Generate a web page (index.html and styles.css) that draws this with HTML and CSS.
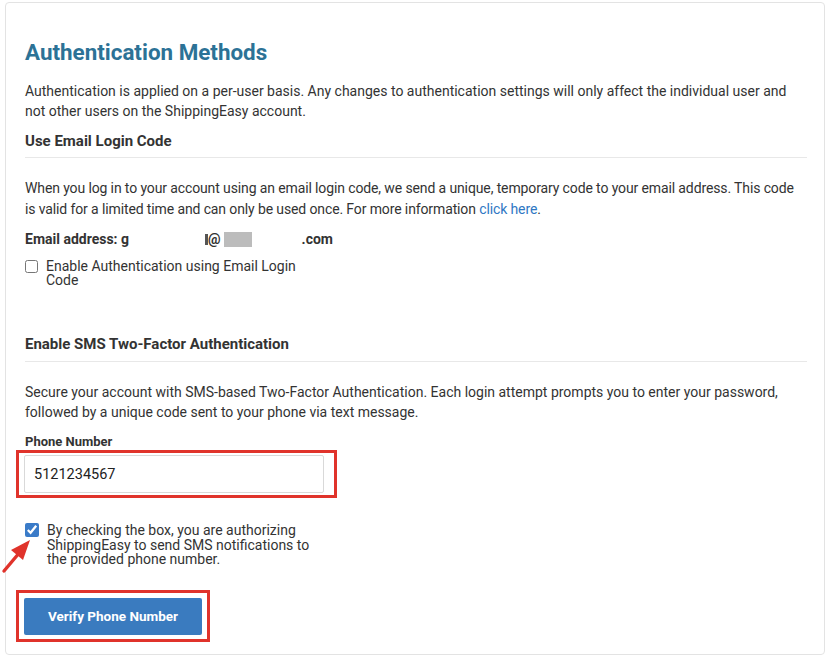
FILE: index.html
```html
<!DOCTYPE html>
<html lang="en">
  <head>
    <meta charset="UTF-8" />
    <meta name="viewport" content="width=device-width, initial-scale=1.0" />
    <title>Authentication Methods</title>
    <link rel="stylesheet" href="styles.css">
  </head>
  <body>
    <main class="panel">
      <h1>Authentication Methods</h1>
      <p class="intro">
        Authentication is applied on a per-user basis. Any changes to authentication settings will only affect the individual user and
        not other users on the ShippingEasy account.
      </p>

      <!-- Email login code -->
      <section class="method email">
        <h2>Use Email Login Code</h2>
        <p class="tight">
          When you log in to your account using an email login code, we send a unique, temporary code to your email address. This code
          is valid for a limited time and can only be used once. For more information <a href="#">click here</a>.
        </p>
        <div class="email-line">
          Email address: g<span class="blur blur-a"></span><span class="blur blur-b"></span>@<span class="blur blur-c"></span>.com
        </div>
        <label class="check">
          <input type="checkbox" />
          <span>Enable Authentication using Email Login Code</span>
        </label>
      </section>

      <!-- SMS two factor -->
      <section class="method sms">
        <h2>Enable SMS Two-Factor Authentication</h2>
        <p>
          Secure your account with SMS-based Two-Factor Authentication. Each login attempt prompts you to enter your password,
          followed by a unique code sent to your phone via text message.
        </p>
        <div class="field-label">Phone Number</div>
        <div class="highlight">
          <input type="text" class="phone" value="5121234567" />
        </div>
        <label class="check consent">
          <input type="checkbox" checked />
          <span>By checking the box, you are authorizing ShippingEasy to send SMS notifications to the provided phone number.</span>
          <svg class="arrow" width="34" height="36" viewBox="0 0 34 36">
            <path d="M3 33 L19 14" stroke="#e0332b" stroke-width="3.4" stroke-linecap="round" fill="none" />
            <path d="M10 12 L29 2 L22 22 Z" fill="#e0332b" />
          </svg>
        </label>
        <div class="highlight btn-wrap">
          <button class="btn-primary">Verify Phone Number</button>
        </div>
      </section>
    </main>
  </body>
</html>
```

FILE: styles.css
```css
body {
  margin: 0;
  padding: 0;
  background: #fff;
  font-family: Roboto, "Liberation Sans", Arial, sans-serif;
  color: #333;
}
.panel {
  margin: 2px 1px 0 5px;
  height: 653px;
  box-sizing: border-box;
  border: 1px solid #e3e3e3;
  border-radius: 4px;
  padding: 36px 17px 0 19px;
}
h1 {
  margin: 0 0 17px;
  font-size: 22.4px;
  line-height: 26px;
  font-weight: 700;
  color: #2c7296;
}
p {
  margin: 0;
  font-size: 14px;
  line-height: 19.5px;
}
.method h2 {
  margin: 10px 0 0;
  padding-bottom: 6px;
  border-bottom: 1px solid #e8e8e8;
  font-size: 15px;
  line-height: 20px;
  font-weight: 700;
  color: #333;
}
.method p {
  margin-top: 20px;
}
.method p.tight {
  line-height: 21px;
  letter-spacing: -0.12px;
}
a {
  color: #2f78c4;
  text-decoration: none;
}
.email-line {
  margin-top: 10px;
  font-size: 14px;
  line-height: 18px;
  font-weight: 700;
}
.blur {
  display: inline-block;
  vertical-align: -3px;
  height: 15px;
}
.blur-a {
  width: 66px;
}
.blur-b {
  width: 13px;
  border-right: 3px solid #555;
  box-sizing: border-box;
  height: 11px;
  vertical-align: -1px;
}
.blur-c {
  width: 28px;
  background: #bcbcbc;
  margin-left: 3px;
  margin-right: 50px;
}
.check {
  display: flex;
  align-items: flex-start;
  gap: 8px;
  width: 290px;
  margin-top: 11px;
  font-size: 14px;
  line-height: 14px;
  position: relative;
}
.check input {
  margin: 1px 0 0;
  width: 13px;
  height: 13px;
  flex: none;
  accent-color: #3a7bc8;
}
.sms h2 {
  margin-top: 47px;
  padding-bottom: 7px;
}
.sms p {
  margin-top: 21px;
}
.field-label {
  margin-top: 12px;
  font-size: 13px;
  line-height: 16px;
  font-weight: 700;
}
.highlight {
  display: inline-block;
  margin: 0 0 0 -9px;
  border: 3px solid #e0332b;
  padding: 2px 10px 2px 5px;
}
.phone {
  display: block;
  width: 300px;
  height: 38px;
  box-sizing: border-box;
  border: 1px solid #d9d9d9;
  border-radius: 2px;
  padding: 0 9px;
  font-family: inherit;
  font-size: 14.5px;
  color: #222;
}
.consent {
  margin-top: 25px;
  width: 300px;
  line-height: 14.5px;
}
.consent input {
  width: 14px;
  height: 14px;
  margin-top: 0;
}
.arrow {
  position: absolute;
  left: -24px;
  top: 15px;
}
.btn-wrap {
  margin-top: 23px;
  padding: 5px 5px 4px 5px;
}
.btn-primary {
  display: block;
  width: 178px;
  height: 37px;
  border: none;
  border-radius: 2px;
  background: #3a7bbf;
  color: #fff;
  font-family: inherit;
  font-size: 13.5px;
  font-weight: 700;
  cursor: pointer;
}
```
